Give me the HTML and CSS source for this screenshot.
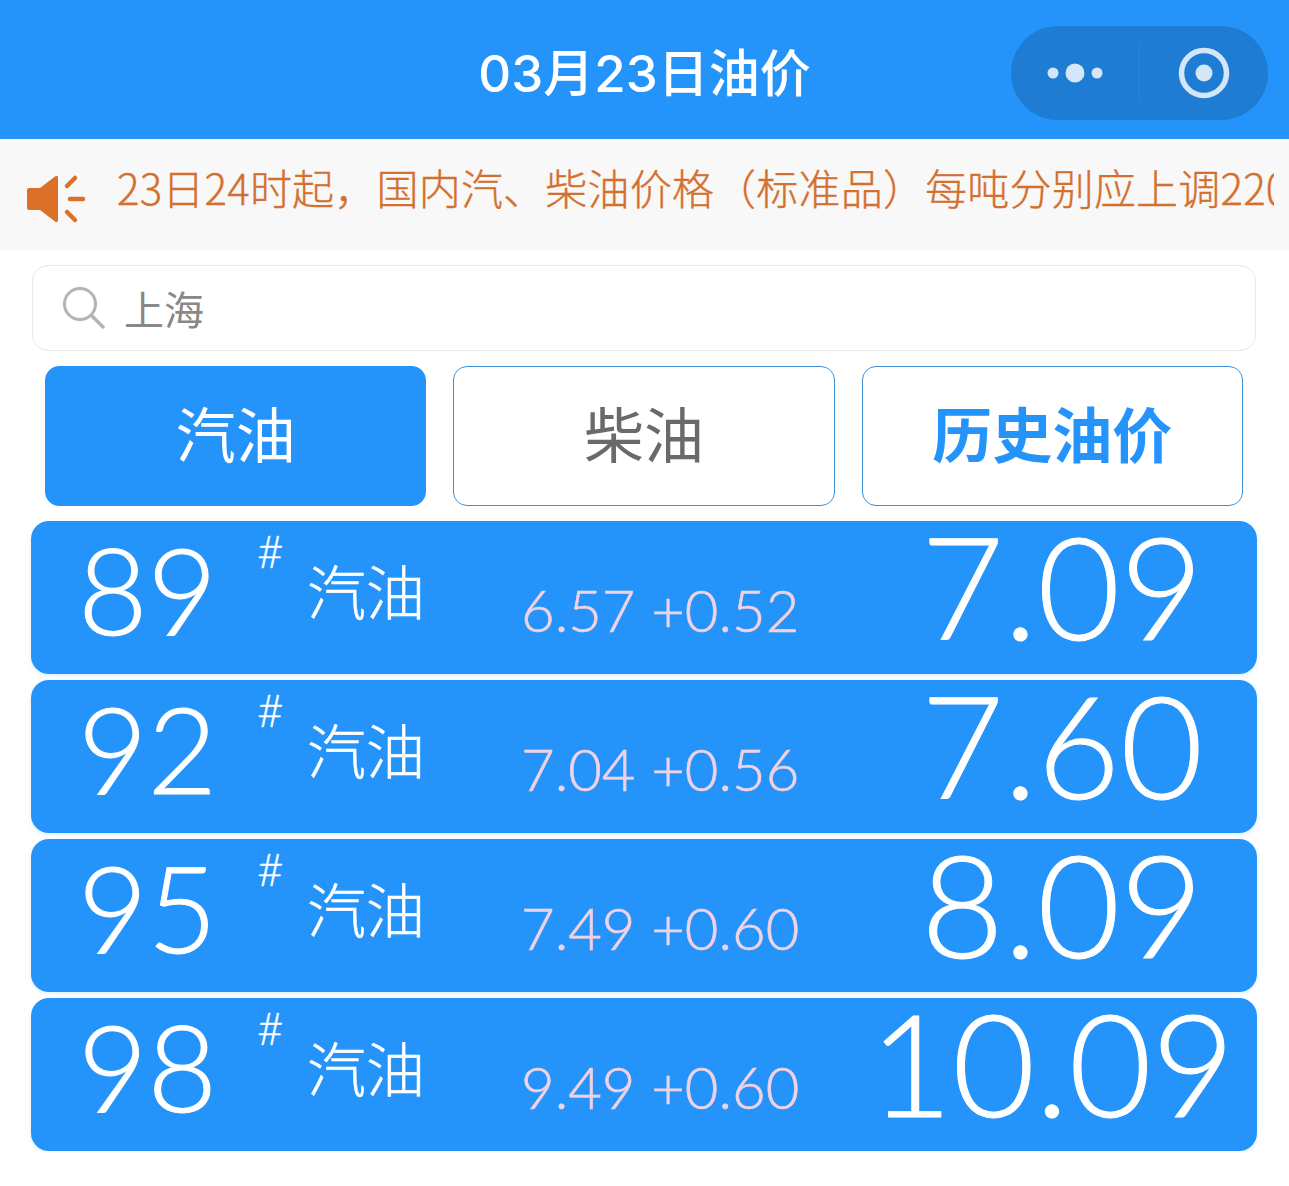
FILE: index.html
```html
<!DOCTYPE html>
<html lang="zh-CN">
<head>
<meta charset="utf-8">
<title>03月23日油价</title>
<link rel="stylesheet" href="styles.css">
</head>
<body>
<header class="nav">
  <h1 class="nav-title">03月23日油价</h1>
  <div class="capsule">
    <div class="capsule-cell capsule-more">
      <svg width="58" height="22" viewBox="0 0 58 22"><circle cx="7" cy="11" r="5.500" fill="#d4e6f8"/><circle cx="29" cy="11" r="9.500" fill="#d4e6f8"/><circle cx="51" cy="11" r="5.500" fill="#d4e6f8"/></svg>
    </div>
    <div class="capsule-sep"></div>
    <div class="capsule-cell capsule-close">
      <svg width="52" height="52" viewBox="0 0 52 52"><circle cx="26" cy="26" r="22.500" fill="none" stroke="#d4e6f8" stroke-width="5.500"/><circle cx="26" cy="26" r="8.500" fill="#d4e6f8"/></svg>
    </div>
  </div>
</header>
<div class="notice">
  <svg class="notice-icon" width="60" height="50" viewBox="0 0 60 50"><path d="M2 14h11L28 2.500c2-1.500 3-.5 3 1.500v42c0 2-1 3-3 1.500L13 36H2c-1 0-2-1-2-2V16c0-1 1-2 2-2z" fill="#dd7029"/><path d="M40 12l8-8M43 25h13M40 38l8 8" fill="none" stroke="#dd7029" stroke-width="4.500" stroke-linecap="round"/></svg>
  <div class="notice-clip"><span class="notice-text">23日24时起，国内汽、柴油价格（标准品）每吨分别应上调220元</span></div>
</div>
<main class="content">
  <div class="search">
    <svg class="search-icon" width="44" height="44" viewBox="0 0 44 44"><circle cx="18" cy="18" r="15.500" fill="none" stroke="#b4b4b4" stroke-width="3"/><path d="M29 29l13 13" fill="none" stroke="#b4b4b4" stroke-width="3.500"/></svg>
    <span class="search-text">上海</span>
  </div>
  <div class="tabs">
    <div class="tab tab-active">汽油</div>
    <div class="tab">柴油</div>
    <div class="tab tab-link">历史油价</div>
  </div>
  <div class="list">
    <div class="card"><span class="grade">89</span><span class="hash">#</span><span class="fuel">汽油</span><span class="delta">6.57 +0.52</span><span class="price">7.09</span></div>
    <div class="card"><span class="grade">92</span><span class="hash">#</span><span class="fuel">汽油</span><span class="delta">7.04 +0.56</span><span class="price">7.60</span></div>
    <div class="card"><span class="grade">95</span><span class="hash">#</span><span class="fuel">汽油</span><span class="delta">7.49 +0.60</span><span class="price">8.09</span></div>
    <div class="card"><span class="grade">98</span><span class="hash">#</span><span class="fuel">汽油</span><span class="delta">9.49 +0.60</span><span class="price price-long">10.09</span></div>
  </div>
</main>
</body>
</html>
```
FILE: styles.css
```css
* { box-sizing: border-box; }
html, body { margin: 0; padding: 0; background: #fff; }
body { font-family: "Noto Sans CJK SC", "Noto Sans", sans-serif; width: 1289px; overflow-x: hidden; }

.nav { height: 139px; background: #2594fa; position: relative; display: flex; align-items: center; justify-content: center; padding-top: 7px; }
.nav-title { margin: 0; color: #fff; font-family: Inter, "Noto Sans CJK SC", sans-serif; font-size: 51px; font-weight: 500; line-height: 1; }
.capsule { position: absolute; left: 1011px; top: 26px; width: 257px; height: 94px; border-radius: 47px; background: #1e7cd3; display: flex; align-items: center; }
.capsule-cell { display: flex; align-items: center; justify-content: center; }
.capsule-more { width: 128px; }
.capsule-sep { width: 1px; height: 60px; background: #2a86da; }
.capsule-close { flex: 1; }

.notice { height: 111px; background: #f8f8f8; display: flex; align-items: center; padding-left: 27px; }
.notice-icon { flex: none; margin-top: 9px; }
.notice-clip { margin-left: 30px; width: 1157px; overflow: hidden; white-space: nowrap; margin-top: -16px; }
.notice-text { font-size: 42px; line-height: 60px; color: #d4702f; letter-spacing: .2px; font-weight: 300; -webkit-text-stroke: .35px #d4702f; }

.content { padding: 15px 33px 0 32px; }
.search { height: 86px; border: 1px solid #e8e8e8; border-radius: 16px; display: flex; align-items: center; padding-left: 29px; }
.search-icon { flex: none; }
.search-text { margin-left: 18px; font-size: 40px; color: #888; }

.tabs { display: flex; gap: 27px; margin: 15px 13px 0; }
.tab { flex: 1; height: 140px; border: 1px solid #3f93d6; border-radius: 14px; display: flex; align-items: center; justify-content: center; font-size: 60px; color: #6a6a6a; padding-bottom: 10px; }
.tab-active { background: #2594fa; border-color: #2594fa; color: #fff; }
.tab-link { color: #2594fa; font-weight: 600; }

.list { display: flex; flex-direction: column; gap: 6px; margin: 15px -1px 0; }
.card { height: 153px; background: #2594fa; border-radius: 18px; box-shadow: 0 2px 4px rgba(37,148,250,.15); color: #fff; display: grid; grid-template-columns: 176px 50px 214px 346px 1fr; padding-left: 50px; font-weight: 300; font-family: Lato, "Noto Sans CJK SC", sans-serif; -webkit-text-stroke: 1px currentColor; }
.grade { font-size: 120px; line-height: 136px; white-space: nowrap; margin-left: -3px; }
.hash { font-size: 46px; line-height: 60px; -webkit-text-stroke: .3px currentColor; }
.fuel { font-size: 59px; line-height: 144px; -webkit-text-stroke: .5px currentColor; }
.delta { font-size: 58px; line-height: 178px; color: #f0d2e4; white-space: nowrap; -webkit-text-stroke: .6px currentColor; }
.price { font-size: 143px; line-height: 128px; text-align: center; white-space: nowrap; }
.price-long { padding-right: 20px; }
```
